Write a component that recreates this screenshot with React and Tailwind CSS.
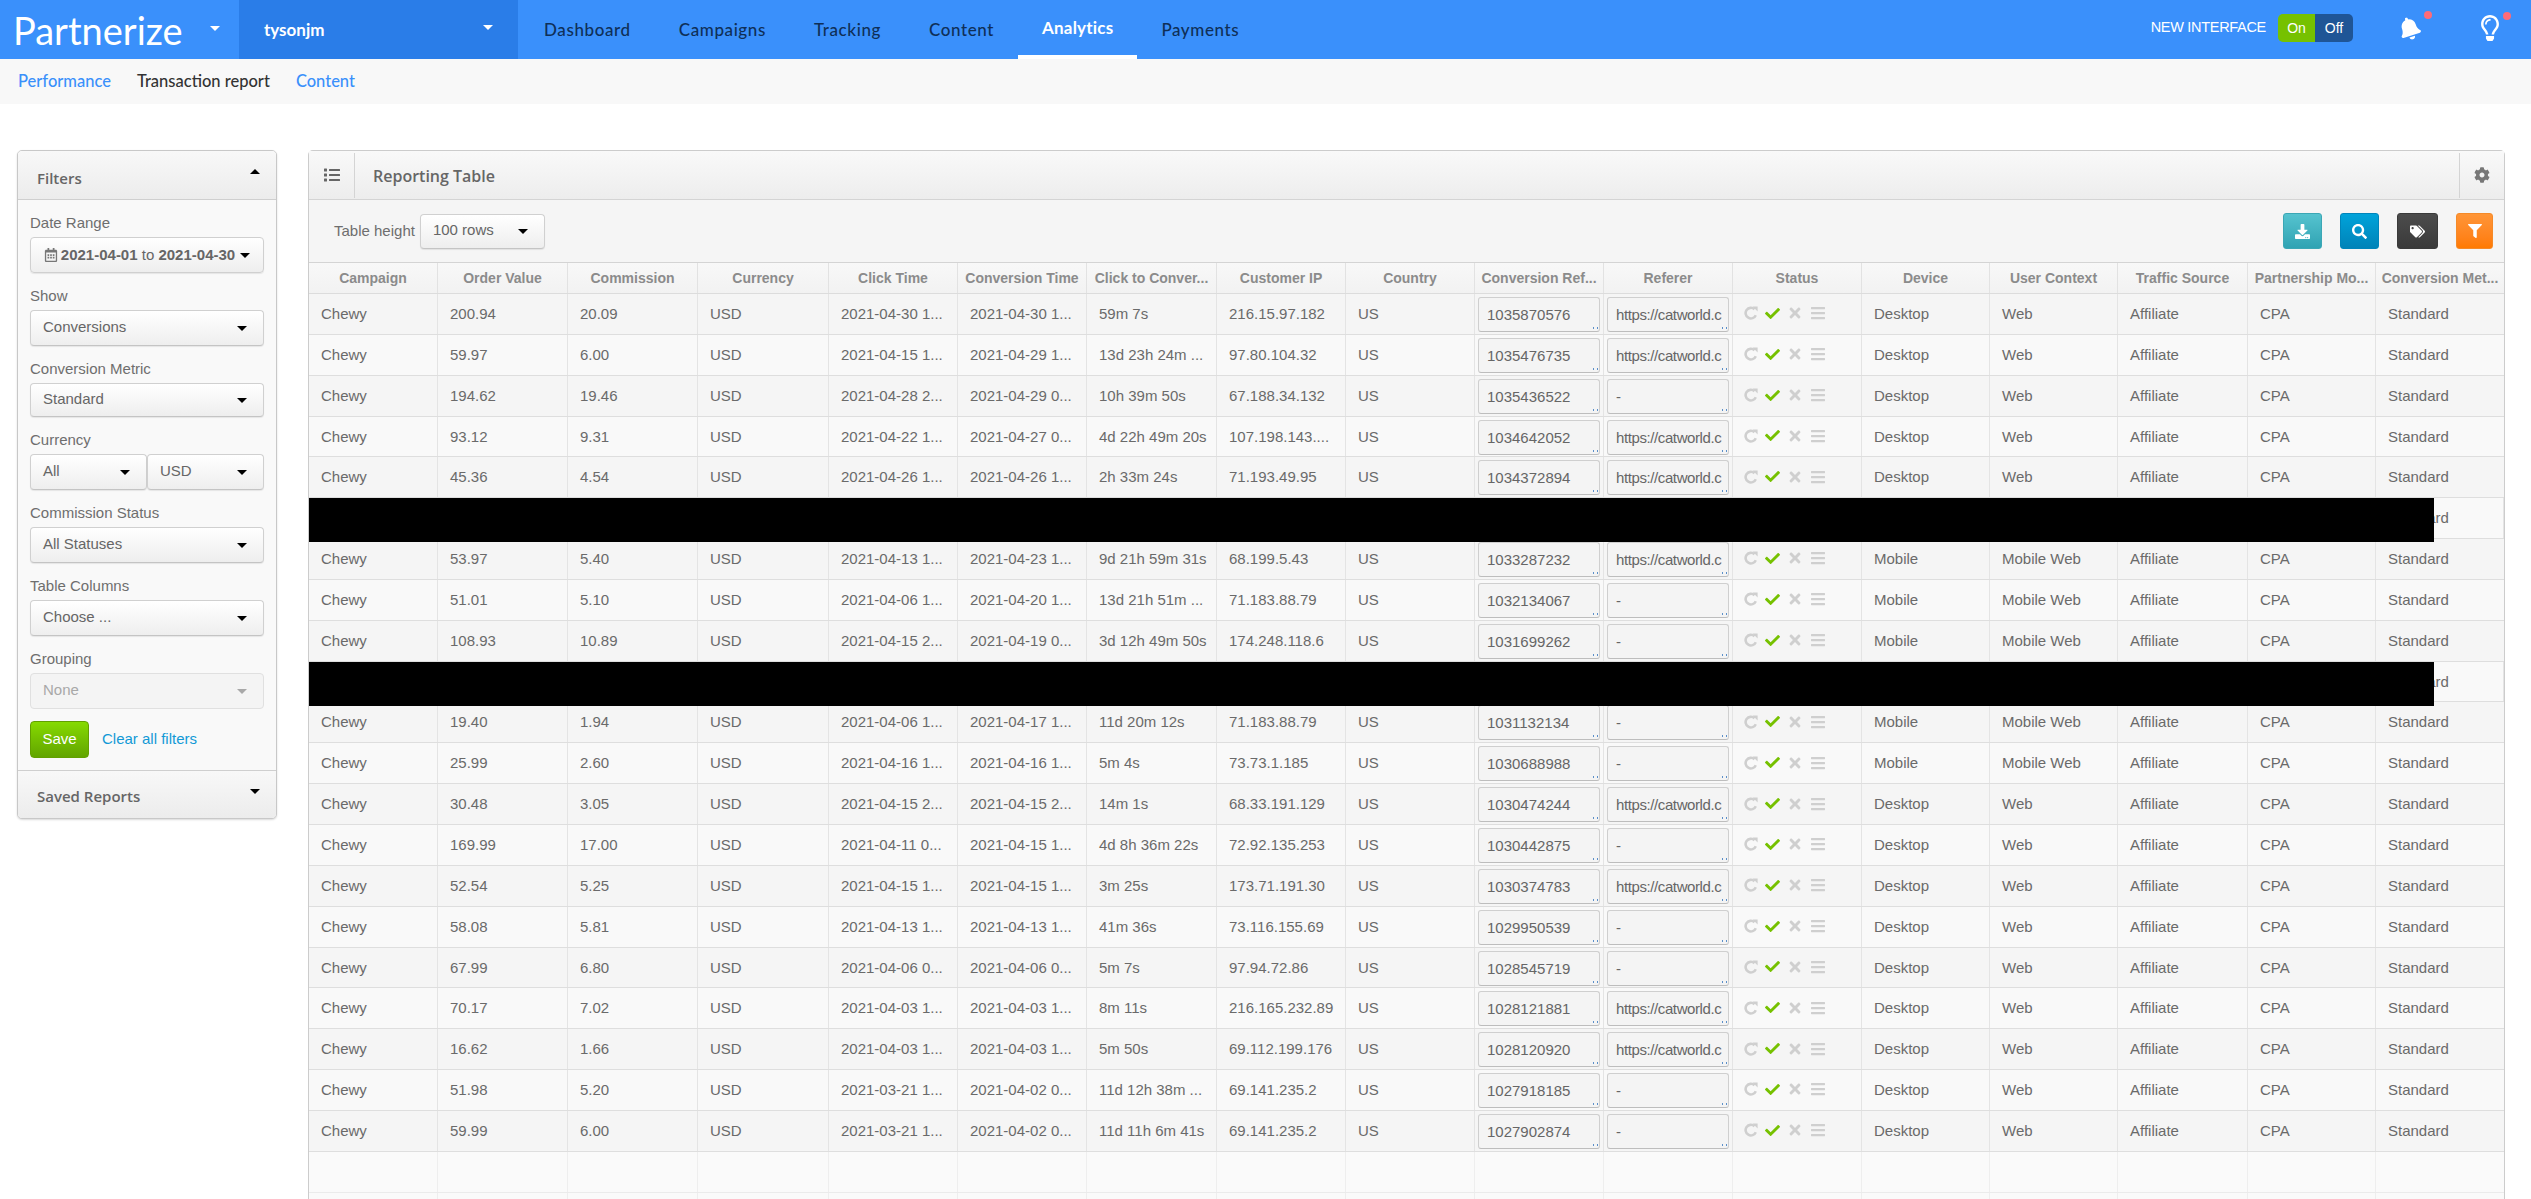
import { FaBars, FaBell, FaCheck, FaCog, FaDownload, FaFilter, FaList, FaRegCalendarAlt, FaRegLightbulb, FaSearch, FaTags, FaTimes } from "react-icons/fa";

const navItems = ["Dashboard", "Campaigns", "Tracking", "Content", "Analytics", "Payments"];

const headers = [
  "Campaign", "Order Value", "Commission", "Currency", "Click Time", "Conversion Time", "Click to Conver...",
  "Customer IP", "Country", "Conversion Ref...", "Referer", "Status", "Device", "User Context", "Traffic Source",
  "Partnership Mo...", "Conversion Met...",
];

const gridCols = "grid grid-cols-[129px_130px_130px_131px_129px_129px_130px_129px_129px_129px_129px_129px_128px_128px_130px_128px_128px]";

const url = "https://catworld.c";

// order, commission, click, conversion, duration, ip, ref, referer, device, context
const rows = [
  ["200.94", "20.09", "2021-04-30 1...", "2021-04-30 1...", "59m 7s", "216.15.97.182", "1035870576", url, "Desktop", "Web"],
  ["59.97", "6.00", "2021-04-15 1...", "2021-04-29 1...", "13d 23h 24m ...", "97.80.104.32", "1035476735", url, "Desktop", "Web"],
  ["194.62", "19.46", "2021-04-28 2...", "2021-04-29 0...", "10h 39m 50s", "67.188.34.132", "1035436522", "-", "Desktop", "Web"],
  ["93.12", "9.31", "2021-04-22 1...", "2021-04-27 0...", "4d 22h 49m 20s", "107.198.143....", "1034642052", url, "Desktop", "Web"],
  ["45.36", "4.54", "2021-04-26 1...", "2021-04-26 1...", "2h 33m 24s", "71.193.49.95", "1034372894", url, "Desktop", "Web"],
  null,
  ["53.97", "5.40", "2021-04-13 1...", "2021-04-23 1...", "9d 21h 59m 31s", "68.199.5.43", "1033287232", url, "Mobile", "Mobile Web"],
  ["51.01", "5.10", "2021-04-06 1...", "2021-04-20 1...", "13d 21h 51m ...", "71.183.88.79", "1032134067", "-", "Mobile", "Mobile Web"],
  ["108.93", "10.89", "2021-04-15 2...", "2021-04-19 0...", "3d 12h 49m 50s", "174.248.118.6", "1031699262", "-", "Mobile", "Mobile Web"],
  null,
  ["19.40", "1.94", "2021-04-06 1...", "2021-04-17 1...", "11d 20m 12s", "71.183.88.79", "1031132134", "-", "Mobile", "Mobile Web"],
  ["25.99", "2.60", "2021-04-16 1...", "2021-04-16 1...", "5m 4s", "73.73.1.185", "1030688988", "-", "Mobile", "Mobile Web"],
  ["30.48", "3.05", "2021-04-15 2...", "2021-04-15 2...", "14m 1s", "68.33.191.129", "1030474244", url, "Desktop", "Web"],
  ["169.99", "17.00", "2021-04-11 0...", "2021-04-15 1...", "4d 8h 36m 22s", "72.92.135.253", "1030442875", "-", "Desktop", "Web"],
  ["52.54", "5.25", "2021-04-15 1...", "2021-04-15 1...", "3m 25s", "173.71.191.30", "1030374783", url, "Desktop", "Web"],
  ["58.08", "5.81", "2021-04-13 1...", "2021-04-13 1...", "41m 36s", "73.116.155.69", "1029950539", "-", "Desktop", "Web"],
  ["67.99", "6.80", "2021-04-06 0...", "2021-04-06 0...", "5m 7s", "97.94.72.86", "1028545719", "-", "Desktop", "Web"],
  ["70.17", "7.02", "2021-04-03 1...", "2021-04-03 1...", "8m 11s", "216.165.232.89", "1028121881", url, "Desktop", "Web"],
  ["16.62", "1.66", "2021-04-03 1...", "2021-04-03 1...", "5m 50s", "69.112.199.176", "1028120920", url, "Desktop", "Web"],
  ["51.98", "5.20", "2021-03-21 1...", "2021-04-02 0...", "11d 12h 38m ...", "69.141.235.2", "1027918185", "-", "Desktop", "Web"],
  ["59.99", "6.00", "2021-03-21 1...", "2021-04-02 0...", "11d 11h 6m 41s", "69.141.235.2", "1027902874", "-", "Desktop", "Web"],
];

const Caret = ({ className = "" }) => (
  <svg viewBox="0 0 10 5" className={`w-[10px] h-[5px] shrink-0 ${className}`}>
    <path d="M0 0h10L5 5z" fill="currentColor" />
  </svg>
);

const RepeatIcon = () => (
  <svg viewBox="0 0 14 14" className="w-[14px] h-[14px] shrink-0">
    <path d="M11.8 9.2A5.3 5.3 0 1 1 10.5 3.2" fill="none" stroke="currentColor" strokeWidth="2.6" />
    <path d="M8.6 .6h5v5z" fill="currentColor" />
  </svg>
);

const Select = ({ value, height = "h-[36px]", className = "" }) => (
  <div className={`flex items-center justify-between ${height} pl-[12px] pr-[16px] rounded-[4px] border border-[#d0d0d0] border-b-[#c4c4c4] bg-gradient-to-b from-white to-[#eeeeee] shadow-[0_1px_1px_rgba(0,0,0,0.08)] text-[15px] text-[#666] ${className}`}>
    <span className="pb-[2px]">{value}</span>
    <Caret className="text-black" />
  </div>
);

const FieldLabel = ({ children }) => (
  <div className="pt-[13px] h-[37px] leading-[20px] text-[15px] text-[#6e6e6e]">{children}</div>
);

const Filters = () => (
  <aside className="w-[260px] shrink-0 self-start rounded-[5px] border border-[#c8c8c8] bg-[#f9f9f9] shadow-[0_1px_2px_rgba(0,0,0,0.15)] overflow-hidden">
    <div className="flex items-center justify-between h-[49px] pl-[19px] pr-[16px] border-b border-[#cfcfcf] bg-gradient-to-b from-[#f8f8f8] to-[#ececec] font-['Open_Sans',sans-serif] font-semibold text-[15px] text-[#666]">
      <span className="pt-[7px]">Filters</span>
      <Caret className="rotate-180 text-black -mt-[7px]" />
    </div>
    <div className="px-[12px] pb-[12px]">
      <FieldLabel>Date Range</FieldLabel>
      <div className="flex items-center justify-center gap-[2px] h-[36px] rounded-[4px] border border-[#d0d0d0] bg-gradient-to-b from-white to-[#eeeeee] shadow-[0_1px_1px_rgba(0,0,0,0.08)] text-[15px] text-[#666] whitespace-nowrap">
        <FaRegCalendarAlt className="text-[14px] text-[#777]" />
        <span className="ml-[1px]"><b>2021-04-01</b> to <b>2021-04-30</b></span>
        <Caret className="text-black ml-[3px]" />
      </div>
      <FieldLabel>Show</FieldLabel>
      <Select value="Conversions" />
      <FieldLabel>Conversion Metric</FieldLabel>
      <Select value="Standard" height="h-[34px]" />
      <FieldLabel>Currency</FieldLabel>
      <div className="flex">
        <Select value="All" className="w-[117px]" />
        <Select value="USD" className="flex-1" />
      </div>
      <FieldLabel>Commission Status</FieldLabel>
      <Select value="All Statuses" />
      <FieldLabel>Table Columns</FieldLabel>
      <Select value="Choose ..." />
      <FieldLabel>Grouping</FieldLabel>
      <div className="flex items-center justify-between h-[36px] pl-[12px] pr-[16px] rounded-[4px] border border-[#e0e0e0] bg-[#f4f4f4] text-[15px] text-[#a8a8a8]">
        <span className="pb-[2px]">None</span>
        <Caret className="text-[#a8a8a8]" />
      </div>
      <div className="flex items-center gap-[13px] mt-[12px]">
        <button className="w-[59px] h-[37px] rounded-[4px] border border-[#62a000] bg-gradient-to-b from-[#86da00] to-[#62a500] text-[15px] text-white">Save</button>
        <a className="text-[15px] text-[#1299d6]">Clear all filters</a>
      </div>
    </div>
    <div className="flex items-center justify-between h-[48px] pl-[19px] pr-[16px] border-t border-[#cfcfcf] bg-gradient-to-b from-[#f8f8f8] to-[#ececec] font-['Open_Sans',sans-serif] font-semibold text-[15px] text-[#666]">
      <span className="pt-[3px]">Saved Reports</span>
      <Caret className="text-black -mt-[7px]" />
    </div>
  </aside>
);

const RefBox = ({ text }) => (
  <div className={`relative flex-1 min-w-0 h-[35px] mt-[3px] rounded-[3px] border border-[#cfcfcf] border-b-[#bdbdbd] bg-[#f4f4f4] pl-[8px] pr-[4px] whitespace-nowrap leading-[33px] text-[15px] text-[#666] ${text === url ? "tracking-[-0.4px]" : ""}`}>
    <div className="overflow-hidden">{text}</div>
    <span className="absolute right-[1px] bottom-[2px] w-[5px] h-[2px] border-x border-[#5b8fc9]" />
  </div>
);

const StatusIcons = () => (
  <div className="flex items-center gap-[7px] pl-[11px] pb-[1px] h-full text-[#cfcfcf]">
    <RepeatIcon />
    <FaCheck className="text-[15px] text-[#76c100]" />
    <FaTimes className="text-[16px]" />
    <FaBars className="text-[16px]" />
  </div>
);

const Cell = ({ children }) => (
  <div className="px-[12px] h-full leading-[39px] border-r border-[#e4e4e4] overflow-hidden whitespace-nowrap last:border-r-0">{children}</div>
);

const Row = ({ row, index }) => {
  const shade = index % 2 === 0 ? "bg-[#f5f5f5]" : "bg-[#f9f9f9]";
  const d = row || Array(10).fill("");
  return (
    <div className={`relative ${gridCols} h-[40.85px] border-b border-[#dedede] text-[15px] text-[#6a6a6a] ${shade}`}>
      <Cell>Chewy</Cell>
      <Cell>{d[0]}</Cell>
      <Cell>{d[1]}</Cell>
      <Cell>USD</Cell>
      <Cell>{d[2]}</Cell>
      <Cell>{d[3]}</Cell>
      <Cell>{d[4]}</Cell>
      <Cell>{d[5]}</Cell>
      <Cell>US</Cell>
      <div className="flex min-w-0 px-[3px] border-r border-[#e4e4e4]"><RefBox text={d[6]} /></div>
      <div className="flex min-w-0 px-[3px] border-r border-[#e4e4e4]"><RefBox text={d[7]} /></div>
      <div className="border-r border-[#e4e4e4]"><StatusIcons /></div>
      <Cell>{d[8]}</Cell>
      <Cell>{d[9]}</Cell>
      <Cell>Affiliate</Cell>
      <Cell>CPA</Cell>
      <Cell>Standard</Cell>
      {!row && <div className="absolute left-0 top-0 w-[2125px] h-[44px] bg-black z-10" />}
    </div>
  );
};

const EmptyRow = ({ index }) => (
  <div className={`${gridCols} h-[40.85px] border-b border-[#ebebeb] bg-[#fafafa]`}>
    {headers.map((h) => (
      <div key={`${index}-${h}`} className="border-r border-[#eeeeee] last:border-r-0" />
    ))}
  </div>
);

const ActionButton = ({ color, width = "w-[39px]", children }) => (
  <button className={`flex items-center justify-center h-[36px] ${width} rounded-[3px] border text-white text-[15px] ${color}`}>{children}</button>
);

const ReportingTable = () => (
  <section className="w-[2197px] shrink-0 rounded-t-[5px] border border-b-0 border-[#cccccc] bg-[#f5f5f5]">
    <div className="flex items-center h-[49px] border-b border-[#d4d4d4] bg-gradient-to-b from-[#f9f9f9] to-[#ededed] font-['Open_Sans',sans-serif] font-semibold text-[16px] text-[#666]">
      <div className="flex items-center justify-center w-[46px] h-[45px] border-r border-[#d4d4d4]">
        <FaList className="text-[16px] text-[#666]" />
      </div>
      <span className="ml-[18px] pt-[2px] flex-1">Reporting Table</span>
      <div className="flex items-center justify-center w-[45px] h-[45px] border-l border-[#d4d4d4]">
        <FaCog className="text-[16px] text-[#777]" />
      </div>
    </div>
    <div className="flex items-center justify-between h-[63px] pl-[25px] pr-[11px] border-b border-[#d4d4d4]">
      <div className="flex items-center gap-[5px] text-[15px] text-[#6e6e6e]">
        <span>Table height</span>
        <Select value="100 rows" height="h-[35px]" className="w-[125px]" />
      </div>
      <div className="flex items-center gap-[18px]">
        <ActionButton color="border-[#3ba7b5] bg-gradient-to-b from-[#55c3cf] to-[#2fa3b3]"><FaDownload /></ActionButton>
        <ActionButton color="border-[#0085bb] bg-gradient-to-b from-[#00a3da] to-[#0083b8]"><FaSearch /></ActionButton>
        <ActionButton color="border-[#3a3a3a] bg-gradient-to-b from-[#4c4c4c] to-[#3a3a3a]" width="w-[41px]"><FaTags /></ActionButton>
        <ActionButton color="border-[#f58a28] bg-gradient-to-b from-[#ff9536] to-[#ff7a00]" width="w-[37px]"><FaFilter className="text-[14px]" /></ActionButton>
      </div>
    </div>
    <div className={`${gridCols} h-[31px] border-b border-[#dcdcdc] bg-gradient-to-b from-[#f8f8f8] to-[#f2f2f2] text-[14px] font-bold text-[#8b8b8b]`}>
      {headers.map((h) => (
        <div key={h} className="px-[4px] text-center leading-[30px] whitespace-nowrap overflow-hidden border-r border-[#e2e2e2] last:border-r-0">{h}</div>
      ))}
    </div>
    {rows.map((row, i) => (
      <Row key={i} row={row} index={i} />
    ))}
    <EmptyRow index={1} />
    <EmptyRow index={2} />
  </section>
);

export default function App() {
  return (
    <div className="h-screen overflow-hidden bg-white font-['Liberation_Sans',Arial,sans-serif]">
      <header className="flex items-center h-[59px] bg-[#3a90fb] font-['Lato',sans-serif]">
        <div className="flex items-center w-[239px] shrink-0 pl-[13px]">
          <span className="text-[38px] font-normal text-white leading-none">Partnerize</span>
          <Caret className="text-white ml-auto mr-[19px] -mt-[3px]" />
        </div>
        <div className="flex items-center justify-between w-[279px] h-full pl-[25px] pr-[25px] bg-[#2a7de8] text-[17px] font-bold text-white">
          <span>tysonjm</span>
          <Caret className="text-white -mt-[4px]" />
        </div>
        <nav className="flex items-end h-full ml-[2px]">
          {navItems.map((item) =>
            item === "Analytics" ? (
              <a key={item} className="flex items-center h-full px-[24px] border-b-[4px] border-white text-[17px] font-bold tracking-[0.2px] text-white">{item}</a>
            ) : (
              <a key={item} className="flex items-center h-full px-[24px] text-[17px] font-medium tracking-[0.6px] text-[#0f2f57]">{item}</a>
            )
          )}
        </nav>
        <div className="flex items-center ml-auto h-full pb-[3px] font-['Liberation_Sans',sans-serif]">
          <span className="text-[14.5px] tracking-[-0.3px] text-white">NEW INTERFACE</span>
          <div className="flex ml-[12px] w-[75px] h-[28px] rounded-[5px] overflow-hidden text-[14px] text-white">
            <span className="flex items-center justify-center w-[37px] bg-[#76c100]">On</span>
            <span className="flex items-center justify-center flex-1 bg-[#1f5596]">Off</span>
          </div>
          <div className="relative ml-[45px] w-[24px]">
            <FaBell className="text-[23px] -rotate-[18deg] text-white" />
            <span className="absolute -top-[6px] -right-[10px] w-[8px] h-[8px] rounded-full bg-[#ff6b78]" />
          </div>
          <div className="relative ml-[55px] mr-[34px] w-[20px]">
            <FaRegLightbulb className="text-[26px] text-white" />
            <span className="absolute -top-[3px] -right-[14px] w-[8px] h-[8px] rounded-full bg-[#ff6b78]" />
          </div>
        </div>
      </header>
      <div className="flex items-center gap-[26px] h-[45px] pl-[18px] bg-[#f8f8f8] font-['Lato',sans-serif] text-[16.5px] font-medium">
        <a className="text-[#3a90fb]">Performance</a>
        <a className="text-[#333]">Transaction report</a>
        <a className="text-[#3a90fb]">Content</a>
      </div>
      <main className="flex items-start gap-[31px] pt-[46px] pl-[17px]">
        <Filters />
        <ReportingTable />
      </main>
    </div>
  );
}
